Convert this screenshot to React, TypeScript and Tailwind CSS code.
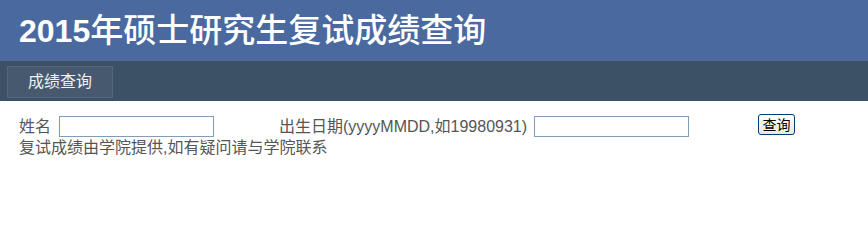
export default function App() {
  return (
    <div className="w-[868px] h-[235px] bg-white font-['Liberation_Sans','Noto_Sans_CJK_SC',sans-serif]">
      {/* Header */}
      <div className="h-[61px] bg-[#4a6a9f] flex items-center pl-[19px]">
        <h1 className="text-white leading-none flex items-baseline">
          <span className="text-[32px] font-bold">2015</span>
          <span className="text-[33px] font-medium">年硕士研究生复试成绩查询</span>
        </h1>
      </div>

      {/* Nav bar */}
      <div className="h-[40px] bg-[#3c5066] pt-[5px] pl-[7px]">
        <div className="w-[106px] h-[32px] bg-[#46596f] border border-[#52667c] flex items-center justify-center text-[16px] text-[#eef0f3]">
          成绩查询
        </div>
      </div>

      {/* Query form */}
      <div className="pl-[19px] pt-[14px] text-[16px] text-[#555] leading-[22px]">
        <div className="flex items-start">
          <div className="w-[260px] flex items-center">
            <span className="mt-[1px]">姓名</span>
            <input
              type="text"
              className="ml-[8px] w-[155px] h-[21px] border border-[#7f9db9] bg-white outline-none"
            />
          </div>
          <div className="w-[479px] flex items-center">
            <span className="mt-[1px]">出生日期(yyyyMMDD,如19980931)</span>
            <input
              type="text"
              className="ml-[7px] w-[155px] h-[21px] border border-[#7f9db9] bg-white outline-none"
            />
          </div>
          <button className="-mt-[1px] w-[37px] h-[21px] border border-[#003c74] rounded-[3px] bg-gradient-to-b from-white to-[#ece9d8] text-[14px] leading-none text-black flex items-center justify-center">
            查询
          </button>
        </div>
        <div className="-mt-[1px]">复试成绩由学院提供,如有疑问请与学院联系</div>
      </div>
    </div>
  );
}
